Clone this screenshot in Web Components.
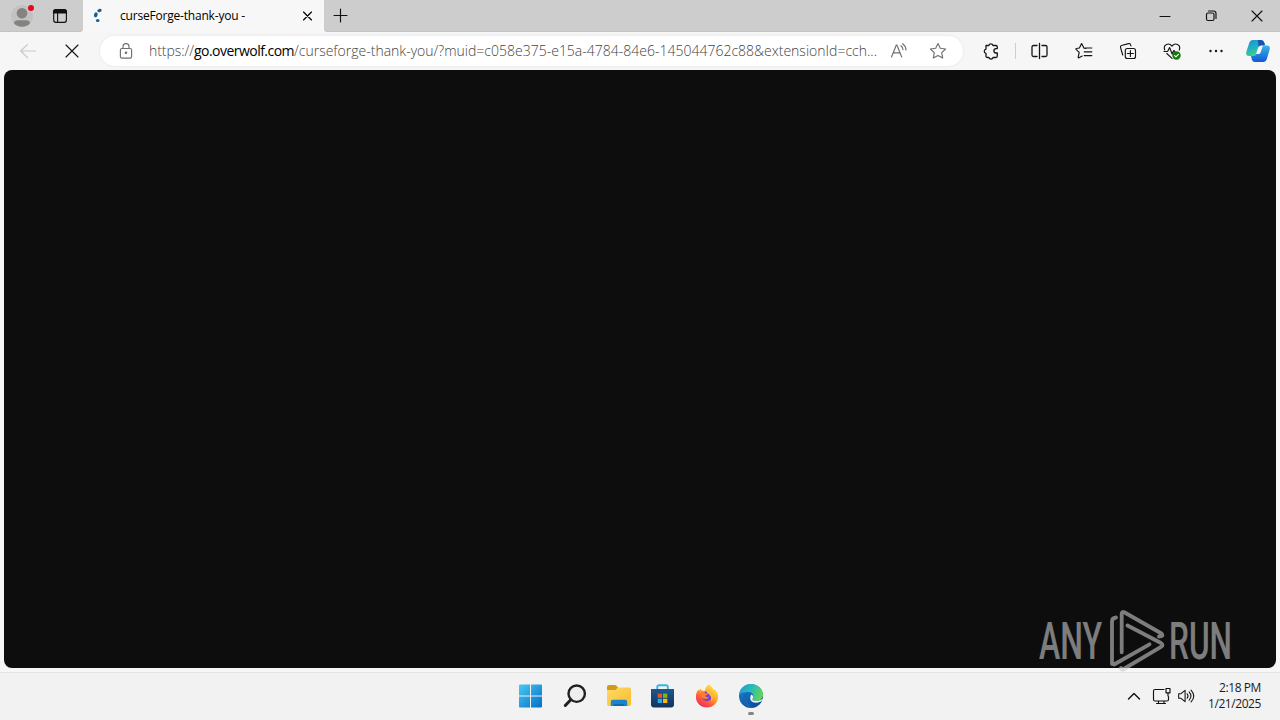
<!DOCTYPE html>
<html lang="en">
<head>
<meta charset="utf-8">
<title>curseForge-thank-you -</title>
<style>
    html, body { margin: 0; height: 100%; overflow: hidden; }
    body { font-family: "Open Sans", "Noto Sans", sans-serif; color: #111; background: #f6f6f6; }
</style>
</head>
<body>
<desktop-screen>
    <tab-strip slot="tabs"><browser-tab>curseForge-thank-you -</browser-tab></tab-strip>
    <tool-bar slot="toolbar">
        <address-bar></address-bar>
    </tool-bar>
    <page-view slot="page"></page-view>
    <task-bar slot="taskbar"></task-bar>
    <run-watermark slot="overlay"></run-watermark>
</desktop-screen>

<script>
const ICONS = {
    profile: `<circle cx="12" cy="12" r="11" fill="#c2c2c2"/><circle cx="12" cy="9.3" r="5.3" fill="#858380"/><path d="M4 19.3c0-2.4 2-3.1 4-3.1h8c2.2 0 4 .8 4 3.1-1.5 2-4.600 3.400-8 3.400s-6.500-1.400-8-3.400z" fill="#858380"/><circle cx="21" cy="4" r="3" fill="#e00b1c"/>`,
    workspaces: `<rect x="5.700" y="5.700" width="12.700" height="12.700" rx="2.300"/><path d="M5.500 9V8q0-2.500 2.500-2.500h8q2.500 0 2.500 2.500v1z" fill="currentColor"/><path d="M9.600 9v9.500"/>`,
    loading: `<g fill="#1d5e8c" stroke="none"><ellipse cx="13.500" cy="6.500" rx="2.200" ry="1.700" transform="rotate(-20 13.500 6.500)"/><ellipse cx="9.800" cy="10.800" rx="1.800" ry="2.500" transform="rotate(20 9.800 10.800)"/><ellipse cx="11.700" cy="16.600" rx="1.800" ry="1.500"/></g>`,
    close: `<path d="M7.500 8l8 8M15.500 8l-8 8"/>`,
    plus: `<path d="M11.500 5v13M5 11.500h13"/>`,
    minimize: `<path d="M7 12.500h10"/>`,
    restore: `<rect x="7.500" y="9" width="7.500" height="7.500" rx="1.500"/><path d="M9.500 7h5q2.500 0 2.500 2.500v5"/>`,
    windowClose: `<path d="M7 7l10 10M17 7L7 17"/>`,
    back: `<path d="M19.500 12H4.800M11.500 5.300L4.800 12l6.700 6.700"/>`,
    stop: `<path d="M6 6l12 12M18 6L6 18"/>`,
    lock: `<rect x="6.400" y="9.500" width="11.200" height="9.600" rx="1.600"/><path d="M9 9.500V7.600a3 3 0 016 0v1.900"/><circle cx="12" cy="13.800" r=".7" fill="currentColor"/>`,
    readAloud: `<path d="M4.500 18L9.300 6h.6l4.800 12M6.200 13.800h6.800M14 6.700q2 1.700 2 4M15.700 4.700q3.300 2.500 3.300 6.200"/>`,
    star: `<path d="M12 4.500l2.300 4.800 5.300.7-3.900 3.700 1 5.300-4.700-2.600L7.300 19l1-5.300L4.400 10l5.300-.7z"/>`,
    puzzle: `<path d="M7 6.500h2.800a2.200 2.200 0 014.200 0h2.800q1.500 0 1.500 1.500v1.600h-1.200a2.200 2.200 0 000 4.400h1.200v3q0 1.500-1.500 1.500h-2.700a2.200 2.200 0 01-4.200 0H8.500Q7 18.500 7 17v-2.600a2.200 2.200 0 010-4.300z" stroke-width="1.300"/>`,
    split: `<path d="M9 6.500H5.500Q4 6.500 4 8v8q0 1.500 1.500 1.500H9M14 6.500h3.500Q19 6.500 19 8v8q0 1.500-1.500 1.500H14M11.500 4.500v15" stroke-width="1.300"/>`,
    favorites: `<path d="M14.100 9.500l-2.200-.4L9.600 4.600 7.400 9l-3.100.5q-.7.200-.2.800l3.100 3-1 4.900q0 .9.800.5l3.200-1.700M13 9h6.800M12.200 12.800h7.600M12.200 16.600h7.600"/>`,
    collections: `<rect x="9.300" y="9.500" width="10.200" height="10" rx="2"/><path d="M14.400 11.500v6M11.400 14.500h6M6.700 16l-2.200-7.600q-.4-1.500 1-1.900l7-1.900q1.500-.4 2 1l.4 1.300"/>`,
    essentials: `<path d="M4.700 11C2.800 5.200 9 3.200 12 7.200c3-4 9.200-2 7.300 3.800M4 12.500h3.600l2-4 2.500 6.500 1.700-3.500 1 1M6.800 14.500L12 19.300"/><circle cx="16.500" cy="16.500" r="4.200" fill="#107c10" stroke="none"/><path d="M14.600 16.600l1.300 1.200 2.500-2.500" stroke="#fff"/>`,
    more: `<g fill="currentColor" stroke="none"><circle cx="6.500" cy="12" r="1.200"/><circle cx="12" cy="12" r="1.200"/><circle cx="17.500" cy="12" r="1.200"/></g>`,
    copilot: `<defs><linearGradient id="l" x1="0" y1="0" x2=".4" y2="1"><stop stop-color="#1c8fd8"/><stop offset=".5" stop-color="#20aec5"/><stop offset="1" stop-color="#43d08a"/></linearGradient><linearGradient id="r" x1="0" y1="0" x2="0" y2="1"><stop stop-color="#35b6e8"/><stop offset="1" stop-color="#1556d6"/></linearGradient></defs><g stroke="none"><path d="M7 1h8q2.500 0 3.200 2.500L19 6h-4q-2 0-2.800 2.600L10 15q-.8 2-3 2H3Q-.5 17 .3 13L3.200 4Q4 1 7 1z" fill="url(#l)"/><path d="M12 1h3q2.500 0 3.200 2.500L19 6.500h-4q-1.500 0-2.400 1.400z" fill="#1750b3"/><path d="M17 6.500h4q3.500 0 2.700 4l-2.900 9.500q-.8 3-3.800 3H9q-2.500 0-3.200-2.500L5 17h2q2.300 0 3.100-2h3q1.300 0 2-3z" fill="url(#r)"/></g>`,
    start: `<defs><linearGradient id="s" gradientUnits="userSpaceOnUse" x1="0" y1="0" x2="24" y2="24"><stop stop-color="#49cbf5"/><stop offset="1" stop-color="#006ac6"/></linearGradient></defs><path d="M0 1.500q0-1 1-1h10v11H0zM12 .5h10q1 0 1 1v10H12zM0 12.500h11v11H1q-1 0-1-1zM12 12.500h11v10q0 1-1 1H12z" fill="url(#s)" stroke="none"/>`,
    search: `<circle cx="13.700" cy="9.700" r="8.200" fill="#eee" stroke="#202124" stroke-width="2.400"/><path d="M7.800 15.700L2.300 21.500" stroke="#202124" stroke-width="3"/>`,
    explorer: `<defs><linearGradient id="f" x1="0" y1="0" x2="1" y2="1"><stop stop-color="#ffda69"/><stop offset="1" stop-color="#f9bc29"/></linearGradient></defs><g stroke="none"><path d="M0 3q0-2 1.800-2h6q1 0 1.700.8L11 3.500V8H0z" fill="#d29a18"/><path d="M0 6h8.500l2.200-2.500H22q2 0 2 2V20q0 2-2 2H2q-2 0-2-2z" fill="url(#f)"/><path d="M3.800 22v-4.300q0-2 2-2h12.400q2 0 2 2V22z" fill="#1a83cc"/><path d="M6.500 22v-1q0-1 1-1h9q1 0 1 1v1z" fill="#1169ad"/></g>`,
    store: `<defs><linearGradient id="b" x1="0" y1="0" x2="0" y2="1"><stop stop-color="#20558f"/><stop offset="1" stop-color="#12345d"/></linearGradient></defs><path d="M6.300 6V3q0-1.800 1.800-1.800h7Q16.800 1.200 16.800 3v3" stroke="#37b5e6" stroke-width="1.900"/><path d="M0 5h23v15.500q0 3-3 3H3q-3 0-3-3z" fill="url(#b)" stroke="none"/><g stroke="none"><path d="M6.700 9.600H11v4.200H6.700z" fill="#f25022"/><path d="M12 9.600h4.300v4.200H12z" fill="#7fba00"/><path d="M6.700 14.800H11V19H6.700z" fill="#28aaeb"/><path d="M12 14.800h4.300V19H12z" fill="#ffb900"/></g>`,
    firefox: `<defs><linearGradient id="x" x1=".85" y1="0" x2=".2" y2="1"><stop stop-color="#fff04c"/><stop offset=".4" stop-color="#ffb02b"/><stop offset=".7" stop-color="#ff5a36"/><stop offset="1" stop-color="#e9246d"/></linearGradient></defs><g stroke="none"><path d="M13.600.5c2.500 1.200 4 3 4.500 4.800 1-.1 1.300.2 2 .8 2 2 3.200 4.500 3 7.200-.3 5.800-5 10.200-11.100 10.200S.8 18.700.9 12.700c0-3 1-5.400 2.700-7.200L4 7l1.600-2.600.8 2.200c1.200-.3 2.300-.1 3.300.4.6-2.900 1.900-5 3.900-6.500z" fill="url(#x)"/><circle cx="12" cy="12.300" r="5" fill="#7740cf"/><path d="M5.500 8.500c2.500-1.500 4-.8 5 .7l2.600.6c-.5 1.200-2.300 1.200-2.800 2.300.7 1.300 2.700 1.400 4 .6-.7 2.500-4.800 3.200-7 1.300-1.600-1.500-2.300-3.500-1.800-5.500z" fill="#ff7b2e"/><path d="M11 6.500c4 0 7 2.500 7 6 0 2-.7 3.500-2 4.500 1-4-1-6.500-4-8z" fill="#ffb931"/></g>`,
    edge: `<defs><linearGradient id="e" x1="0" y1=".2" x2="1" y2=".5"><stop stop-color="#229bd7"/><stop offset=".5" stop-color="#28bdb7"/><stop offset="1" stop-color="#65d553"/></linearGradient><linearGradient id="d" x1="0" y1="0" x2=".5" y2="1"><stop stop-color="#238ad8"/><stop offset="1" stop-color="#0c4e9d"/></linearGradient></defs><g stroke="none"><circle cx="12" cy="12" r="12" fill="url(#d)"/><path d="M.1 11C.7 4.800 5.700 0 12 0c7 0 12 5.300 12 10.500 0 4-3.200 6.500-6.800 6.500-3 0-4.500-1-3.500-2.400 1.800-2.700.4-6.200-3.700-6.600C5.600 7.600 1.500 9 .1 11z" fill="url(#e)"/><path d="M10 8c-4.300 3.600-3.300 13.700 5 15.600C9 24.500 4.200 20.600 4.200 15.500 4.200 12 6.500 8.800 10 8z" fill="#1466b5"/><path d="M13.700 14.600c-1 1.400.5 2.400 3.500 2.400 2.100 0 4-.6 5.700-1.800.5-.3 1 .1.600.8-2.600 3.200-9 3.800-11.500.8-1.200-1.700-.9-4.600.3-6.300 2 .8 2.300 2.600 1.400 4.100z" fill="#f1f3f4"/></g>`,
    chevron: `<path d="M6.500 15l5.500-5.500 5.500 5.500" stroke-width="1.400"/>`,
    network: `<path d="M14 5.500H5q-1.500 0-1.500 1.500v8.500q0 1.500 1.500 1.500h12q1.500 0 1.500-1.500v-3M8.500 17v2.500M14 17v2.500M6.500 19.500h9M16 4.500h4v4.300h-4zM18 9v3"/>`,
    volume: `<path d="M4 9.500h2.500L11 5.800v12.400L6.500 14.500H4zM13.200 9.500q2 2.500 0 5M15.400 7.500q4 4.500 0 9M17.500 5.500q6 6.500 0 13"/>`
};

class UiIcon extends HTMLElement {
    connectedCallback() {
        if (this.shadowRoot) return;
        const size = this.getAttribute('size') || 24;
        this.attachShadow({ mode: 'open' }).innerHTML = `
            <style>
                :host { display: inline-flex; flex: none; align-items: center; justify-content: center; }
                svg { display: block; overflow: visible; }
            </style>
            <svg width="${size}" height="${size}" viewBox="0 0 24 24" fill="none" stroke="currentColor"
                stroke-width="1.150" stroke-linecap="round" stroke-linejoin="round">${ICONS[this.getAttribute('name')]}</svg>
        `;
        // filled artwork carries its own colours
        if (this.getAttribute('name') === 'profile') {
            this.shadowRoot.querySelector('svg').setAttribute('stroke', 'none');
        }
    }
}

// One line of text, tracked out or in so that it fills the given width.
class FitText extends HTMLElement {
    connectedCallback() {
        if (this.shadowRoot) return;
        this.attachShadow({ mode: 'open' }).innerHTML = `
            <style>
                :host { display: block; flex: none; white-space: nowrap; width: ${this.getAttribute('width')}px; }
                span { display: inline-block; }
            </style>
            <span><slot></slot></span>
        `;
        this.shadowRoot.querySelector('slot').addEventListener('slotchange', () => this.fit());
        this.fit();
    }

    fit() {
        const count = this.textContent.length;
        if (!count) return;
        const span = this.shadowRoot.querySelector('span');
        span.style.letterSpacing = '0';
        const extra = this.getAttribute('width') - span.getBoundingClientRect().width;
        span.style.letterSpacing = extra / count + 'px';
    }
}

class DesktopScreen extends HTMLElement {
    constructor() {
        super();
        this.attachShadow({ mode: 'open' }).innerHTML = `
            <style>
                :host {
                    display: grid;
                    grid-template-rows: 32px 38px 598px 4px 48px;
                    width: 1280px;
                    height: 720px;
                    position: relative;
                    overflow: hidden;
                }
            </style>
            <slot name="tabs"></slot>
            <slot name="toolbar"></slot>
            <slot name="page"></slot>
            <div></div>
            <slot name="taskbar"></slot>
            <slot name="overlay"></slot>
        `;
    }
}

class TabStrip extends HTMLElement {
    constructor() {
        super();
        this.attachShadow({ mode: 'open' }).innerHTML = `
            <style>
                :host { display: flex; background: #f6f6f6; }
                .left, .right { display: flex; align-items: center; background: #cdcdcd; box-shadow: inset 0 -1px #c3c3c3; }
                .left { width: 83px; box-sizing: border-box; padding-left: 10px; gap: 14px; border-bottom-right-radius: 4px; }
                .right { flex: 1; border-bottom-left-radius: 4px; }
                .plus { width: 34px; }
                .controls { display: flex; margin-left: auto; }
                .controls ui-icon { width: 46px; }
            </style>
            <div class="left">
                <ui-icon name="profile"></ui-icon>
                <ui-icon name="workspaces"></ui-icon>
            </div>
            <slot></slot>
            <div class="right">
                <ui-icon class="plus" name="plus"></ui-icon>
                <div class="controls">
                    <ui-icon name="minimize"></ui-icon>
                    <ui-icon name="restore"></ui-icon>
                    <ui-icon name="windowClose"></ui-icon>
                </div>
            </div>
        `;
    }
}

class BrowserTab extends HTMLElement {
    constructor() {
        super();
        this.attachShadow({ mode: 'open' }).innerHTML = `
            <style>
                :host {
                    display: flex;
                    align-items: center;
                    width: 241px;
                    box-sizing: border-box;
                    padding: 0 4px 0 3px;
                    background: #f7f7f7;
                    font-size: 12px;
                    line-height: 32px;
                    color: #000;
                }
                .title { margin-left: 10px; }
                .close { margin-left: auto; }
            </style>
            <ui-icon name="loading"></ui-icon>
            <fit-text class="title" width="125"></fit-text>
            <ui-icon class="close" name="close"></ui-icon>
        `;
    }

    connectedCallback() {
        this.shadowRoot.querySelector('.title').textContent = this.textContent;
    }
}

class ToolBar extends HTMLElement {
    constructor() {
        super();
        this.attachShadow({ mode: 'open' }).innerHTML = `
            <style>
                :host { display: flex; align-items: center; background: #f6f6f6; color: #151515; }
                ui-icon { width: 44px; }
                .back { color: #c8c8c8; margin-left: 6px; }
                .puzzle { margin-left: 6px; }
                .line { width: 1px; height: 16px; margin: 0 2px; background: #cecece; }
                .copilot { width: 40px; }
            </style>
            <ui-icon class="back" name="back"></ui-icon>
            <ui-icon name="stop"></ui-icon>
            <slot></slot>
            <ui-icon class="puzzle" name="puzzle"></ui-icon>
            <div class="line"></div>
            <ui-icon name="split"></ui-icon>
            <ui-icon name="favorites"></ui-icon>
            <ui-icon name="collections"></ui-icon>
            <ui-icon name="essentials"></ui-icon>
            <ui-icon name="more"></ui-icon>
            <ui-icon class="copilot" name="copilot"></ui-icon>
        `;
    }
}

class AddressBar extends HTMLElement {
    constructor() {
        super();
        this.attachShadow({ mode: 'open' }).innerHTML = `
            <style>
                :host {
                    display: flex;
                    align-items: center;
                    width: 863px;
                    height: 30px;
                    margin-left: 6px;
                    box-sizing: border-box;
                    padding: 0 13px 0 14px;
                    border-radius: 15px;
                    background: #fff;
                    box-shadow: 0 0 2px 1px #ededed;
                    color: #6f6f6f;
                }
                .url { display: flex; margin-left: 11px; width: 728px; font-size: 14px; line-height: 30px; font-weight: 300; color: #444; }
                .host { color: #000; font-weight: 400; }
                .read { margin-left: 10px; }
                .star { margin-left: 15px; }
            </style>
            <ui-icon name="lock"></ui-icon>
            <div class="url"><fit-text width="45">https://</fit-text><fit-text class="host" width="100">go.overwolf.com</fit-text><fit-text width="583">/curseforge-thank-you/?muid=c058e375-e15a-4784-84e6-145044762c88&amp;extensionId=cch...</fit-text></div>
            <ui-icon class="read" name="readAloud"></ui-icon>
            <ui-icon class="star" name="star"></ui-icon>
        `;
    }
}

class PageView extends HTMLElement {
    constructor() {
        super();
        this.attachShadow({ mode: 'open' }).innerHTML = `
            <style>
                :host { display: block; margin: 0 4px; border-radius: 8px; background: #0d0d0d; }
            </style>
        `;
    }
}

class TaskBar extends HTMLElement {
    constructor() {
        super();
        this.attachShadow({ mode: 'open' }).innerHTML = `
            <style>
                :host {
                    display: grid;
                    grid-template-columns: 509px 264px 1fr;
                    background: #f2f2f2;
                    border-top: 1px solid #e5e5e5;
                    box-sizing: border-box;
                }
                .apps { display: flex; }
                .app { width: 44px; display: grid; grid-template-rows: 38px 4px; justify-items: center; align-content: start; padding-top: 4px; }
                .running::after { content: ""; width: 6px; height: 3px; border-radius: 2px; background: #858585; margin-top: -3px; }
                .tray { display: flex; align-items: center; justify-content: flex-end; padding: 0 19px 1px 0; }
                .network { margin-left: 4px; }
                .volume { margin-left: 1px; }
                .clock { display: flex; flex-direction: column; align-items: flex-end; width: 64px; font-size: 12px; line-height: 16px; color: #1b1b1b; }
            </style>
            <div></div>
            <div class="apps">
                <div class="app"><ui-icon name="start"></ui-icon></div>
                <div class="app"><ui-icon name="search"></ui-icon></div>
                <div class="app"><ui-icon name="explorer"></ui-icon></div>
                <div class="app"><ui-icon name="store"></ui-icon></div>
                <div class="app"><ui-icon name="firefox"></ui-icon></div>
                <div class="app running"><ui-icon name="edge"></ui-icon></div>
            </div>
            <div class="tray">
                <ui-icon name="chevron"></ui-icon>
                <ui-icon class="network" name="network"></ui-icon>
                <ui-icon class="volume" name="volume" size="22"></ui-icon>
                <div class="clock">
                    <fit-text width="42">2:18 PM</fit-text>
                    <fit-text width="53">1/21/2025</fit-text>
                </div>
            </div>
        `;
    }
}

class RunWatermark extends HTMLElement {
    constructor() {
        super();
        this.attachShadow({ mode: 'open' }).innerHTML = `
            <style>
                :host { display: block; position: absolute; left: 1030px; top: 600px; opacity: .5; }
                svg { display: block; }
                text { font: 500 52px Roboto, sans-serif; fill: #ededed; }
                path { fill: none; stroke: #ededed; stroke-width: 3.800; stroke-linejoin: round; stroke-linecap: round; }
                .tail { stroke: #c6c6c6; }
            </style>
            <svg width="250" height="76" viewBox="0 0 250 76">
                <clipPath id="below"><rect y="68" width="250" height="8"/></clipPath>
                <text x="9" y="59" textLength="63" lengthAdjust="spacingAndGlyphs">ANY</text>
                <text x="139" y="59" textLength="63" lengthAdjust="spacingAndGlyphs">RUN</text>
                <path d="M86 17.500q-4 .5-4 4V64l2 .5 35.500-20.200"/>
                <path d="M91.700 52.300V14q0-3 3-1.500L131.500 33.500q2.500 3-2.500 3"/>
                <path d="M97.500 25.500l33.500 17.500q3 2 0 3.800L94.500 68.500q-2 1.500-3.500-.5"/>
                <g clip-path="url(#below)"><path class="tail" d="M104 62.800L94.500 69q-2 1.500-3.500-.5"/></g>
            </svg>
        `;
    }
}

customElements.define('ui-icon', UiIcon);
customElements.define('fit-text', FitText);
customElements.define('desktop-screen', DesktopScreen);
customElements.define('tab-strip', TabStrip);
customElements.define('browser-tab', BrowserTab);
customElements.define('address-bar', AddressBar);
customElements.define('tool-bar', ToolBar);
customElements.define('page-view', PageView);
customElements.define('task-bar', TaskBar);
customElements.define('run-watermark', RunWatermark);
</script>
</body>
</html>
